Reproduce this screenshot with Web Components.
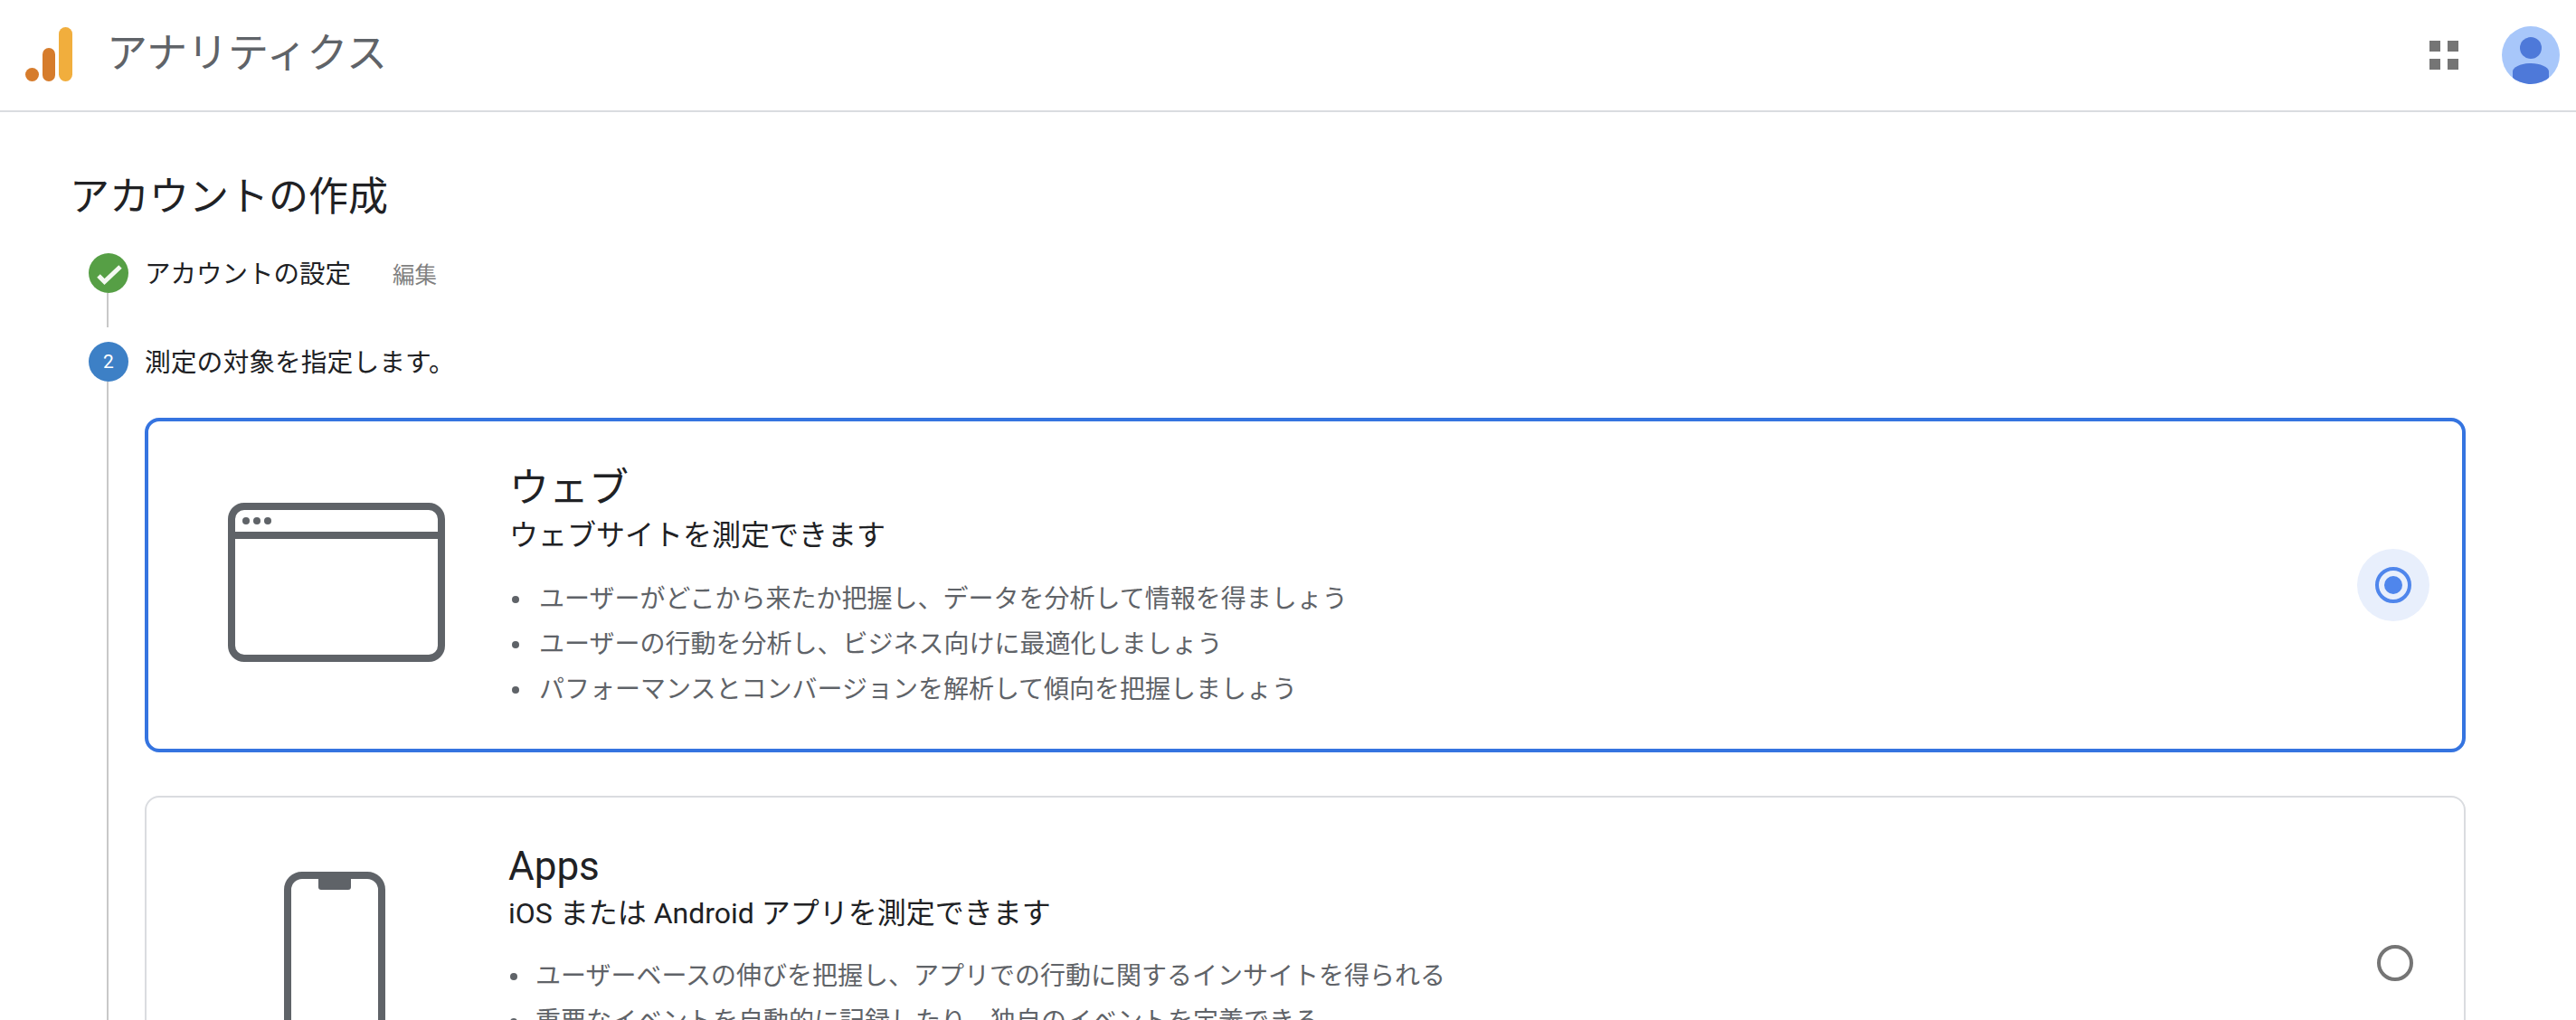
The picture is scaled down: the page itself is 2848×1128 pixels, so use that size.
<!DOCTYPE html>
<html lang="ja"><head><meta charset="utf-8"><title>アナリティクス</title>
<style>
html,body{margin:0;height:1128px;overflow:hidden;background:#fff}
body{font-family:Roboto,"Noto Sans CJK JP",sans-serif;color:#202124}
</style></head><body>
<ga-header>アナリティクス</ga-header>
<ga-main>
  <ga-step state="done" label="アカウントの設定" action="編集"></ga-step>
  <ga-step state="2" label="測定の対象を指定します。" last>
    <ga-card selected kind="web" title-text="ウェブ" sub="ウェブサイトを測定できます">
      <li>ユーザーがどこから来たか把握し、データを分析して情報を得ましょう</li>
      <li>ユーザーの行動を分析し、ビジネス向けに最適化しましょう</li>
      <li>パフォーマンスとコンバージョンを解析して傾向を把握しましょう</li>
    </ga-card>
    <ga-card kind="app" title-text="Apps" sub="iOS または Android アプリを測定できます">
      <li>ユーザーベースの伸びを把握し、アプリでの行動に関するインサイトを得られる</li>
      <li>重要なイベントを自動的に記録したり、独自のイベントを定義できる</li>
    </ga-card>
  </ga-step>
</ga-main>
<script>
function def(name,html){
  customElements.define(name,class extends HTMLElement{
    connectedCallback(){
      if(this.shadowRoot)return;
      const r=this.attachShadow({mode:'open'});
      r.innerHTML=typeof html==='function'?html(this):html;
    }
  });
}
def('ga-header',`<style>
:host{display:flex;align-items:center;height:122px;border-bottom:2px solid #dadce0;padding:0 18px 0 28px}
.t{font-size:45px;line-height:60px;color:#5f6368;margin-left:38px;margin-top:-2px}
.sp{flex:1}
svg{display:block}
.logo{margin-top:-2px}
.apps{margin-right:48px}
</style>
<svg class="logo" width="52" height="60" viewBox="0 0 52 60"><circle cx="7.5" cy="52.5" r="7.5" fill="#d67c2c"/><rect x="19" y="23" width="14" height="37" rx="7" fill="#d67c2c"/><rect x="37" y="0" width="15" height="60" rx="7.5" fill="#f1ae3d"/></svg>
<span class="t"><slot></slot></span><span class="sp"></span>
<svg class="apps" width="32" height="32" viewBox="0 0 32 32" fill="#757575"><rect width="12" height="12"/><rect x="20" width="12" height="12"/><rect y="20" width="12" height="12"/><rect x="20" y="20" width="12" height="12"/></svg>
<svg width="64" height="64" viewBox="0 0 64 64"><defs><clipPath id="c"><circle cx="32" cy="32" r="32"/></clipPath></defs><g clip-path="url(#c)"><rect width="64" height="64" fill="#a8c7fa"/><circle cx="32" cy="24" r="12" fill="#4e79d9"/><path d="M12 64V50c0-5 10-9 20-9s20 4 20 9v14z" fill="#4e79d9"/></g></svg>`);
def('ga-main',`<style>
:host{display:block;padding:0 122px 0 80px}
h1{margin:0 0 0 -3px;font-weight:400;font-size:44px;line-height:60px;padding:64px 0 0;height:92px;color:#202124}
</style><h1>アカウントの作成</h1><slot></slot>`);
def('ga-step',h=>{
  const done=h.getAttribute('state')==='done';
  const a=h.getAttribute('action');
  return `<style>
:host{display:grid;grid-template-columns:44px 1fr;column-gap:18px;margin-left:18px}
.rail{display:flex;flex-direction:column;align-items:flex-start;${done?'margin-bottom:16px':''}}
.c{width:44px;height:44px;border-radius:50%;display:flex;align-items:center;justify-content:center;color:#fff;font-size:21px;flex:none}
.line{width:2px;flex:1;background:#c8c8c8;margin-left:20px}
.head{height:44px;display:flex;align-items:center;font-size:${done?'28.5px':'28.8px'};color:#202124}
.head span:first-child{margin-top:-4px}
.head .act{font-size:24.5px;color:#808080;margin-left:46px;margin-top:0}
.body{padding-bottom:${done?'54px':'0'}}
.slotbox{margin-top:${done?'0':'40px'}}
</style>
<div class="rail"><div class="c" style="background:${done?'#569f45':'#3d80c6'}">${done?'<svg width="44" height="44" viewBox="0 0 44 44"><path d="M11 25l6.5 6.5L35 15" fill="none" stroke="#f4f9f2" stroke-width="5"/></svg>':h.getAttribute('state')}</div><div class="line"></div></div>
<div class="body"><div class="head"><span>${h.getAttribute('label')}</span>${a?`<span class="act">${a}</span>`:''}</div><div class="slotbox"><slot></slot></div></div>`;
});
def('ga-card',h=>{
  const sel=h.hasAttribute('selected'),web=h.getAttribute('kind')==='web';
  const icon=web
  ?`<svg width="240" height="176" viewBox="0 0 240 176" fill="none" stroke="#5f6368" stroke-width="8"><rect x="4" y="4" width="232" height="168" rx="14"/><path d="M4 36h232"/><g fill="#5f6368" stroke="none"><circle cx="20" cy="20" r="4"/><circle cx="32" cy="20" r="4"/><circle cx="44" cy="20" r="4"/></g></svg>`
  :`<svg width="112" height="192" viewBox="0 0 112 192" fill="none" stroke="#5f6368" stroke-width="8"><rect x="4" y="4" width="104" height="184" rx="16"/><path d="M38 4h36v13a3 3 0 0 1-3 3H41a3 3 0 0 1-3-3z" fill="#5f6368" stroke="none"/></svg>`;
  const radio=sel
  ?`<div class="halo"><div class="ring on"><i></i></div></div>`
  :`<div class="halo"><div class="ring"></div></div>`;
  return `<style>
:host{display:flex;align-items:center;box-sizing:border-box;height:370px;margin-bottom:${sel?'48px':'0'};border:${sel?'4px solid #3574e0':'2px solid #dadce0'};border-radius:16px;background:#fff}
.ic{flex:none;align-self:flex-start;margin-left:${sel?'88px':'152px'};margin-top:${sel?'90px':'82px'}}
svg{display:block}
.tx{flex:1;align-self:flex-start;margin-left:${sel?'71px':'136px'};padding-top:${sel?'47px':'49px'}}
.ti{font-size:44px;line-height:55px;color:#202124}
.su{font-size:32px;line-height:48px;color:#202124}
.bw{margin-top:${sel?'22px':'21px'}}
::slotted(li){display:block;font-size:28px;line-height:50px;color:#5f6368;position:relative;padding-left:${sel?'33px':'30px'}}
::slotted(li)::before{content:"";position:absolute;left:${sel?'3px':'2px'};top:21px;width:8px;height:8px;border-radius:50%;background:#5f6368}
.halo{flex:none;width:80px;height:80px;border-radius:50%;margin-right:36px;display:flex;align-items:center;justify-content:center;${sel?'background:#e8effc':''}}
.ring{box-sizing:border-box;width:40px;height:40px;border-radius:50%;border:4px solid #757575;display:flex;align-items:center;justify-content:center}
.ring.on{border-color:#4f86ec}
.ring i{display:block;width:20px;height:20px;border-radius:50%;background:#4f86ec}
</style>
<div class="ic">${icon}</div>
<div class="tx"><div class="ti">${h.getAttribute('title-text')}</div><div class="su">${h.getAttribute('sub')}</div><div class="bw"><slot></slot></div></div>
${radio}`;
});
</script>
</body></html>
